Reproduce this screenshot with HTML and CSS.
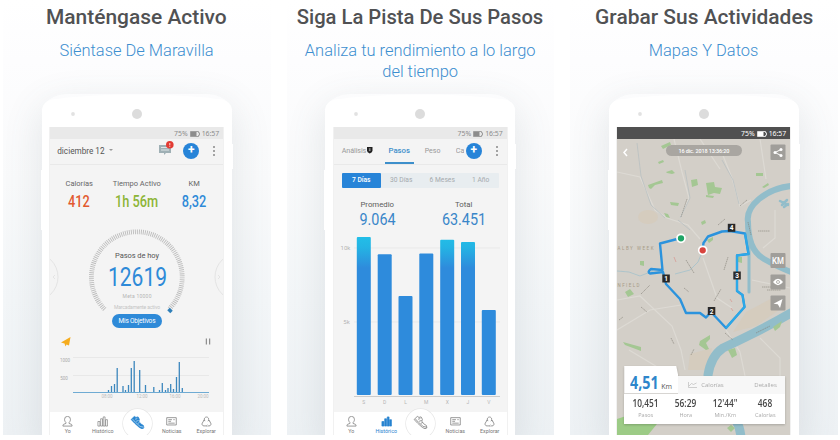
FILE: index.html
```html
<!DOCTYPE html>
<html lang="es">
<head>
<meta charset="utf-8">
<title>Podómetro</title>
<link rel="stylesheet" href="styles.css">
</head>
<body>
<svg class="defs" width="0" height="0" aria-hidden="true">
  <symbol id="cap" viewBox="0 0 190 33">
    <path d="M0 33V16Q0 8 10 5.500Q48 0.500 95 0.500T180 5.500Q190 8 190 16V33Z" fill="#fff"/>
    <circle cx="95" cy="20" r="5" fill="#dcdcdc"/><circle cx="31" cy="20" r="1.900" fill="#e2e2e2"/>
  </symbol>
  <symbol id="battery" viewBox="0 0 10 6">
    <path d="M.5 .5h8v1.300h1v2.400h-1v1.300h-8z" fill="none" stroke="currentColor" stroke-width=".8"/><path d="M1 1h5.500v4H1z" fill="currentColor"/>
  </symbol>
  <symbol id="user" viewBox="0 0 12 12">
    <path d="M4.300 7.200C3 6 2.800 4.500 2.800 3.600a3.200 3.200 0 0 1 6.400 0c0 .9-.2 2.400-1.500 3.600v.9l2.600 1q.7.400.7 1.900H1q0-1.500.7-1.900l2.600-1z" fill="none" stroke="currentColor" stroke-width=".8"/>
  </symbol>
  <symbol id="bars" viewBox="0 0 12 12">
    <path d="M1 6h2.200v5H1zM4 3h2v8H4zM6.800 1h2v10h-2zM9.400 4h2v7h-2z" fill="var(--fill, none)" stroke="currentColor" stroke-width=".7"/>
  </symbol>
  <symbol id="shoe" viewBox="0 0 16 16">
    <path d="M1.200 4.800 4.600 1.500 6.400 2.600 8.600 2 10 4.600 9.400 6.600 11.300 9.300 14.300 11.200 14.800 13.800 12.800 14.600 10 13.300 5 8.800z" fill="var(--fill, none)" stroke="currentColor" stroke-width=".8" stroke-linejoin="round"/>
    <path d="M2.600 4.200 5.800 7.700 10.800 12.200 14.500 13M5.400 4.500l2.400-.7M6.500 6.700l2.700-.9M8.300 8.900l2-.9" fill="none" stroke="var(--lace, currentColor)" stroke-width=".8"/>
  </symbol>
  <symbol id="news" viewBox="0 0 12 12">
    <path d="M.8 1.800h10.400v8H.8zM2.500 4h4M2.500 5.800h3M8 4h1.500M2.500 7.800h7" fill="none" stroke="currentColor" stroke-width=".8"/>
  </symbol>
  <symbol id="explore" viewBox="0 0 12 12">
    <path d="M3.700 4.200a2.400 2.400 0 1 1 4.600 0M8.700 4.700l1.900 3A2 2 0 0 1 8.800 10.800H7.300M3.300 4.700 1.400 7.700A2 2 0 0 0 3.200 10.800H5.500M2.500 4.900l1.200-.6.600 1.300M7 9.700 5.800 10.800 7 11.800M9.600 5.800 8.500 4.400 7.500 5.700" fill="none" stroke="currentColor" stroke-width=".8"/>
  </symbol>
</svg>

<main class="gallery">
  <section class="panel">
    <h2><span class="t1">Manténgase Activo</span></h2>
    <p class="sub"><span>Siéntase De Maravilla</span></p>
    <div class="phone">
      <svg class="cap"><use href="#cap"/></svg>
      <div class="screen">
        <div class="status">75% <svg class="battery"><use href="#battery"/></svg> 16:57</div>
        <header class="bar">
          <span class="date">diciembre 12</span><i class="caret"></i>
          <svg class="chat" viewBox="0 0 16 15"><path d="M1 4h12v8H8l-2 2v-2H1z" fill="#9fb0b5"/><path d="M3 6.500h7M3 9h8" stroke="#dfe6e8"/><circle cx="11.800" cy="3.800" r="3.800" fill="#e23b33"/><path d="M11.800 2v2.400M11.800 5v.8" stroke="#fff" stroke-width=".8"/></svg>
          <span class="add">+</span>
          <span class="dots"><i></i><i></i><i></i></span>
        </header>
        <div class="stats">
          <div><small>Calorías</small><b class="red">412</b></div>
          <div><small>Tiempo Activo</small><b class="green">1h 56m</b></div>
          <div><small>KM</small><b class="blue">8,32</b></div>
        </div>
        <svg class="dial" viewBox="50 213 173 117">
          <g fill="none" stroke="#e4e4e4"><circle cx="34" cy="277" r="24"/><circle cx="239" cy="277" r="24"/></g>
          <path d="M55 275l-2 2 2 2M218 275l2 2-2 2" fill="none" stroke="#ddd" stroke-width=".7"/>
          <path d="M104.700 309.300A45.400 45.400 0 1 1 168.900 309.300" fill="none" stroke="#bcbcbc" stroke-width="4.800" stroke-dasharray=".9 1.080"/>
          <path d="M168.500 309l3 3" stroke="#2f7fb8" stroke-width="3.500"/>
          <text x="137" y="258" font-size="7.500" fill="#555" textLength="44">Pasos de hoy</text>
          <text x="137.500" y="286" font-size="25" fill="#2e8ad8" textLength="59" lengthAdjust="spacingAndGlyphs">12619</text>
          <text x="137" y="297.500" font-size="5" fill="#b5b5b5" textLength="29">Meta 10000</text>
          <text x="137" y="308.500" font-size="5" fill="#c4c4c4" textLength="46">Marcadamente activo</text>
          <rect x="112" y="314" width="50" height="14" rx="7" fill="#2e8ad8"/>
          <text x="137" y="323.300" font-size="6.500" fill="#fff" textLength="37">Mis Objetivos</text>
        </svg>
        <svg class="chart" viewBox="50 330 173 82">
          <path d="M61 342.500 70.500 337 69 345.500 66.500 344.500 65.500 346.500 64.500 343.600z" fill="#f5ac1e"/>
          <path d="M206.300 338.500v6M209.700 338.500v6" stroke="#777"/>
          <path d="M73 357.500h136M73 375.500h136" stroke="#e8e8e8"/>
          <g fill="#aaa" font-size="4.500"><text x="65" y="362">1000</text><text x="64" y="379.500">500</text>
          <g fill="#bbb"><text x="107" y="398">08:00</text><text x="142" y="398">12:00</text><text x="175" y="398">16:00</text><text x="203" y="398">20:00</text></g></g>
          <path d="M108.500 392v-2M111.500 392v-6M114.500 392v-8M117.200 392v-24M123 392v-6M125.500 392v-2M128.500 392v-7M131.300 392v-24M134.200 392v-31M139.700 392v-22M145.500 392v-7M153.800 392v-5M159.500 392v-2M162.300 392v-9M165.500 392v-2M168 392v-4M170.700 392v-8M173.500 392v-3M176.500 392v-15M179.300 392v-30M182.300 392v-4" stroke="#3c87bd" stroke-width="1.300"/>
          <path d="M73 392.500h136" stroke="#6fabd3"/>
        </svg>
        <nav class="tabs">
          <span><svg><use href="#user"/></svg>Yo</span>
          <span><svg><use href="#bars"/></svg>Histórico</span>
          <span class="center on"><svg><use href="#shoe"/></svg></span>
          <span><svg><use href="#news"/></svg>Noticias</span>
          <span><svg><use href="#explore"/></svg>Explorar</span>
        </nav>
      </div>
    </div>
  </section>

  <section class="panel">
    <h2><span class="t2">Siga La Pista De Sus Pasos</span></h2>
    <p class="sub"><span>Analiza tu rendimiento a lo largo</span><br><span>del tiempo</span></p>
    <div class="phone">
      <svg class="cap"><use href="#cap"/></svg>
      <div class="screen">
        <div class="status">75% <svg class="battery"><use href="#battery"/></svg> 16:57</div>
        <header class="bar sections">
          <span class="analysis">Análisis<svg class="badge" viewBox="0 0 6 7"><path d="M0 0h6v4Q6 6 3 7 0 6 0 4z" fill="#222"/><path d="M2 2h2M2 3.500h2M3 1.500v3" stroke="#ddd" stroke-width=".5"/></svg></span>
          <span class="current">Pasos</span>
          <span class="weight">Peso</span>
          <span class="cut">Ca</span>
          <span class="add">+</span>
          <span class="dots"><i></i><i></i><i></i></span>
        </header>
        <div class="range"><span class="active">7 Días</span><span>30 Días</span><span>6 Meses</span><span>1 Año</span></div>
        <div class="totals">
          <div><small>Promedio</small><b>9.064</b></div>
          <div><small>Total</small><b>63.451</b></div>
        </div>
        <svg class="history" viewBox="333 230 173 182">
          <defs><linearGradient id="top" gradientUnits="userSpaceOnUse" x1="0" y1="236" x2="0" y2="268"><stop offset="0" stop-color="#22bfe8"/><stop offset=".35" stop-color="#24b4e4"/><stop offset="1" stop-color="#2e8bdc"/></linearGradient></defs>
          <path d="M353 248h146M353 322h146" stroke="#e9e9e9"/>
          <g fill="#b5b5b5" font-size="6"><text x="344.500" y="249.800">10k</text><text x="345.500" y="324">5k</text></g>
          <g fill="#2e8bdc">
            <rect x="355.800" y="237" width="14" height="158" rx="1" fill="url(#top)"/>
            <rect x="376.700" y="254.300" width="14" height="140.700" rx="1"/>
            <rect x="397.500" y="296" width="14" height="99" rx="1"/>
            <rect x="418.300" y="253.500" width="14" height="141.500" rx="1"/>
            <rect x="439.200" y="239.700" width="14" height="155.300" rx="1" fill="url(#top)"/>
            <rect x="460" y="242" width="14" height="153" rx="1" fill="url(#top)"/>
            <rect x="480.800" y="310" width="14" height="85" rx="1"/>
          </g>
          <path d="M353 396.500h146" stroke="#ccc"/>
          <g fill="#b5b5b5" font-size="5"><text x="362.800" y="404">S</text><text x="383.700" y="404">D</text><text x="404.500" y="404">L</text><text x="425.300" y="404">M</text><text x="446.200" y="404">X</text><text x="467" y="404">J</text><text x="487.800" y="404">V</text></g>
        </svg>
        <nav class="tabs">
          <span><svg><use href="#user"/></svg>Yo</span>
          <span class="on"><svg><use href="#bars"/></svg>Histórico</span>
          <span class="center"><svg><use href="#shoe"/></svg></span>
          <span><svg><use href="#news"/></svg>Noticias</span>
          <span><svg><use href="#explore"/></svg>Explorar</span>
        </nav>
      </div>
    </div>
  </section>

  <section class="panel">
    <h2><span class="t3">Grabar Sus Actividades</span></h2>
    <p class="sub"><span>Mapas Y Datos</span></p>
    <div class="phone">
      <svg class="cap"><use href="#cap"/></svg>
      <div class="screen">
        <div class="status dark">75% <svg class="battery"><use href="#battery"/></svg> 16:57</div>
        <div class="mapbox">
          <svg class="map" viewBox="617 139 173 296">
            <rect x="617" y="139" width="173" height="296" fill="#d3cfc8"/>
            <g fill="#d6cbb9" opacity=".7"><ellipse cx="648" cy="217" rx="10" ry="7"/><path d="M746 312 776 296 782 308 756 326 733 332zM690 354l22-6-4 22h-20z"/></g>
            <g fill="none" stroke="#dddad4" stroke-width="1.200">
              <path d="M617 172 640 177 655 210 667 218 688 225 700 239M674 139 682 172 689 198 680 218M720 148 732 178 740 206 751 200M617 300 640 296 672 326 681 350 685 370M617 330 650 310 681 305M726 330 740 352 745 376M760 139l6 40M700 139l20 30M775 210v28l-12 10M752 280l38 8M703 258l14 40 15 10M629 350l40 24M760 338l20 20v20"/>
            </g>
            <g fill="none" stroke="#b9c0c1" stroke-width=".8">
              <path d="M637 143 641 176 651 205 665 218M685 170 690 198 680 218M678 220 690 230M722 160 733 180 739 204"/>
              <path d="M617 271 629 272 640 276 653 271M675 274 690 270 698 262 703 250" stroke="#a3c2cc"/>
            </g>
            <g fill="none" stroke="#92bdca" stroke-linecap="round">
              <path d="M791 186Q772 188 759 199T748 222Q748 250 764 259T791 272" stroke-width="6"/>
              <path d="M749 231v61" stroke-width="3"/>
              <path d="M791 313Q772 324 754 333T723 348Q711 356 708 375Q708 395 724 407T741 438" stroke-width="9"/>
              <path d="M782 205l5-5M780 201l8 4M784 207l4-3" stroke-width="2.500"/>
            </g>
            <path d="M617 419 632 414H665L648 435H617z" fill="#9ccb86"/>
            <g fill="#a4c793">
              <path d="M661 146l9-4 1 3-8 4zM658 162l5-2 1 2-5 2zM666 172l6-2 3 3-3 1-5-1zM648 185l14-5 1 3-8 2-4 4-2-1zM691 180l6-1 1 6-6 2zM706 183l8-1 1 5 7 1-2 6-6-1-6 2zM706 195l8 1-1 2-7-1zM756 173h7v3h-7zM762 187l6-4 1 2-5 3zM670 202l9 1-1 3-7-1zM664 213l4 1 2 4-4-1zM701 222l4-2 1 3-4 2zM707 240l6-3v3l-4 3zM738 257h4v6l-4-1zM640 261h4v5l-4-1zM625 292l5-3 4 5-6 3zM623 342l18 5v4l-16-6zM700 341l10-6v4l-4 4 3 6-3 1-7-5zM773 327l9-6-2 6-5 4zM728 350l7-2 2 7-5 3zM727 428l4-3 4 3-4 4z"/>
            </g>
            <g stroke="#858178" stroke-width=".9" opacity=".65">
              <path d="M681 217l6-18M718 225l7-6M740 206l7-6M686 260l8 13M641 294l9-9M724 270l4-13M714 301l7-12M684 288l5 4M641 307l6 5M671 338l3 6M691 355l3-6M725 333l8 7M756 333l14-7M758 231h12M762 287h18M767 290h14M619 320l4-3M748 222l3 13" stroke-dasharray="1.500 .5"/>
              <path d="M674 257l2 5M730 299l2 3M731 308l2 3" stroke="#d98b84"/>
            </g>
            <g class="place"><text x="617.500" y="249.500" textLength="36">ALBY WEEK</text><text x="617.500" y="287" textLength="22">NFIELD</text></g>
            <path d="M681 238 660 243.500 662.500 270 651 269Q647 272 650 273.500L663 272 666 284 680 299 686 313H700L706 317.500 711 312 726 328 744.500 307 742.500 295 737 291V255.500L748.500 254 745 233.500 730 231 722 231.500 708 236.500 703.500 243 702.500 250" fill="none" stroke="#2b93dd" stroke-width="2.400" stroke-linejoin="round"/>
            <path d="M726 328 744.500 307 742.500 295 737 291V255.500L748.500 254 745 233.500" fill="none" stroke="#2ca9e8" stroke-width="2"/>
            <g stroke="#fff" stroke-width="1.700"><circle cx="681" cy="238.300" r="4" fill="#20a566"/><circle cx="702.700" cy="250.300" r="4" fill="#d8443e"/></g>
            <g fill="#292929"><rect x="662.300" y="274.500" width="7.500" height="8"/><rect x="707.800" y="307" width="7.500" height="8"/><rect x="733.300" y="271.500" width="7.500" height="8"/><rect x="727.800" y="223.800" width="7.500" height="8"/></g>
            <g class="marker"><text x="666" y="281">1</text><text x="711.500" y="313.500">2</text><text x="737" y="278">3</text><text x="731.500" y="230.300">4</text></g>
            <path d="M627 149l-3 3.500 3 3.500" fill="none" stroke="#fff" stroke-width="1.500"/>
            <rect x="666" y="145" width="76" height="11" rx="5.500" fill="#a9a6a1"/>
            <text x="704" y="152.500" font-size="5.500" font-weight="500" fill="#fff" textLength="51">16 dic. 2018 13:36:20</text>
            <g fill="#a09e9a"><rect x="770.500" y="144.500" width="15" height="15.500" rx="1"/><rect x="770.500" y="253" width="15" height="15" rx="1"/><rect x="770.500" y="274.500" width="15" height="15" rx="1"/><rect x="770.500" y="295.500" width="15" height="15" rx="1"/></g>
            <path d="M781 149.500 775 152.500 781 155.500" fill="none" stroke="#fff"/>
            <g fill="#fff"><circle cx="781" cy="149.500" r="1.500"/><circle cx="775" cy="152.500" r="1.500"/><circle cx="781" cy="155.500" r="1.500"/></g>
            <text x="778" y="263.700" font-size="8.500" font-weight="500" fill="#fff" textLength="12" lengthAdjust="spacingAndGlyphs">KM</text>
            <path d="M773 282q5-6.500 10 0-5 6.500-10 0" fill="#fff"/><circle cx="778" cy="282" r="1.500" fill="none" stroke="#a09e9a" stroke-width=".8"/>
            <path d="M782.500 299 780 308 777.800 304.300 773.500 303.700z" fill="#fff"/>
          </svg>
          <div class="card">
            <div class="distance"><b>4,51</b><small>Km</small></div>
            <div class="links"><svg viewBox="0 0 9 6"><path d="M.5 0v5.500H9M1 4l2.500-2.500 2 1L8.500 1" fill="none" stroke="#bbb" stroke-width=".7"/></svg><span>Calorías</span><span class="more">Detalles</span></div>
            <div class="figures">
              <div><b>10,451</b><small>Pasos</small></div>
              <div><b>56:29</b><small>Hora</small></div>
              <div><b>12'44"</b><small>Min./Km</small></div>
              <div><b>468</b><small>Calorías</small></div>
            </div>
          </div>
        </div>
      </div>
    </div>
  </section>
</main>
</body>
</html>
```
FILE: styles.css
```css
* { box-sizing: border-box; }
body { margin: 0; height: 440px; overflow: hidden; background: #fff; font-family: Roboto, "Liberation Sans", sans-serif; }
svg { display: block; }
svg text { text-anchor: middle; font-family: Roboto, sans-serif; }
.defs { position: absolute; }
.gallery { display: flex; gap: 16px; padding-left: 3px; height: 434.5px; overflow: hidden; }
.panel {
  width: 267.5px; flex: none; overflow: hidden; display: flex; flex-direction: column; align-items: center;
  background: linear-gradient(#fff 0, #fdfdfe 60px, #f9fafb 180px, #f3f6f8 300px, #edf1f4 435px);
}
h2 { margin: 0; height: 36px; padding-top: 5px; line-height: 24px; font-size: 20px; font-weight: 500; color: #505153; white-space: nowrap; }
.sub { margin: 0; height: 58px; padding-top: 4px; font-size: 17px; line-height: 21.500px; font-weight: 300; color: #3d8fd0; text-align: center; white-space: nowrap; }
h2 span, .sub span { display: inline-block; }
.t1, .t3 { transform: scaleX(1.047); }
.t2 { transform: scaleX(1.01); }
.sub span { transform: scaleX(.968); }

.phone { position: relative; width: 190px; height: 341px; flex: none; padding: 0 8.500px; border-radius: 26px 26px 0 0 / 18px 18px 0 0; background: linear-gradient(transparent 30px, #fff 30px); box-shadow: 0 12px 36px 4px rgba(80, 95, 105, .12); }
.phone::before, .phone::after { content: ""; position: absolute; width: 1px; background: #fff; }
.phone::before { left: -1px; top: 76px; height: 60px; }
.phone::after { right: -1px; top: 50px; height: 25px; }
.cap { width: 190px; height: 33px; margin-left: -8.500px; }
.screen { width: 173px; height: 308px; background: #f4f4f4; display: flex; flex-direction: column; box-shadow: 0 0 0 .5px #e3e3e3; overflow: hidden; }
.status { height: 12px; flex: none; display: flex; align-items: center; justify-content: flex-end; gap: 2px; padding: 2px 4px 0 0; background: #e9e9e9; color: #8c8c8c; font: 6.900px/10px "Noto Sans", sans-serif; }
.battery { width: 10px; height: 6px; }
.status.dark { background: #505050; color: #fff; }

.bar { height: 26px; flex: none; display: flex; align-items: center; border-bottom: 1px solid #e9e9e9; font-size: 8.200px; color: #555; padding: 0 8px 1px 7px; }
.date { width: 47px; white-space: nowrap; }
.caret { margin: 0 0 1px 4.500px; border: 2.500px solid transparent; border-top-color: #999; border-bottom: 0; }
.chat { width: 16px; height: 15px; margin: -5px 11px 0 auto; }
.add { width: 16px; height: 16px; border-radius: 50%; background: #2784d8; color: #fff; font-size: 12px; font-weight: 700; line-height: 15.500px; text-align: center; }
.chat + .add { margin-right: -1.500px; position: relative; left: -1.500px; }
.dots { display: flex; flex-direction: column; gap: 2px; margin-left: 14px; }
.dots i { width: 2px; height: 2px; border-radius: 50%; background: #888; }

.stats { height: 48px; flex: none; display: grid; grid-template-columns: 58px 57px 58px; text-align: center; padding-top: 13px; white-space: nowrap; }
.stats small { display: block; font-size: 7.500px; line-height: 12px; color: #666; }
.stats b { display: block; font-size: 16.800px; line-height: 22px; font-weight: 500; transform: scaleX(.76); }
.red { color: #e2592f; } .green { color: #8db537; } .blue { color: #2e8ad8; }
.dial { width: 173px; height: 117px; flex: none; }
.chart { width: 173px; height: 82px; flex: none; }

.tabs { height: 23px; flex: none; display: grid; grid-template-columns: 35px 35px 34px 35px 34px; background: #fff; color: #777; font-size: 5.300px; line-height: 6px; text-align: center; }
.tabs span { display: flex; flex-direction: column; align-items: center; padding-top: 4px; }
.tabs svg { width: 11px; height: 11px; margin-bottom: 1.500px; }
.tabs .on { color: #2784d0; --fill: #2784d0; --lace: #bcdcf2; }
.tabs .center { width: 29px; height: 29px; margin: -3px 0 0 2.500px; padding-top: 6px; border-radius: 50%; background: #fff; box-shadow: 0 0 0 .7px #e6e6e6; }
.tabs .center svg { width: 15px; height: 15px; }

.sections { padding-left: 8px; font-size: 7.200px; color: #999; }
.analysis { display: flex; align-items: center; width: 43px; letter-spacing: -.1px; }
.badge { width: 5.500px; height: 6.500px; margin-left: 1px; }
.current { width: 29px; height: 26px; padding-top: 1px; line-height: 24px; text-align: center; font-size: 7.800px; font-weight: 500; color: #3d8fcb; border-bottom: 2px solid #3d8fcb; }
.weight { width: 31px; margin-left: 11px; font-size: 7px; }
.cut { width: 8px; overflow: hidden; margin-right: 2px; }
.sections .add { flex: none; margin-left: 0; }
.range { height: 15px; flex: none; margin: 8px 8px 0; display: grid; grid-template-columns: 39px 41px 41px 36px; background: #e8edf0; color: #a5aaae; font-size: 6.700px; line-height: 15px; text-align: center; border-radius: 1px; }
.range .active { background: #2784d8; color: #fff; font-weight: 500; border-radius: 1px; }
.totals { height: 42px; flex: none; display: grid; grid-template-columns: 87px 86px; text-align: center; padding-top: 11px; }
.totals small { display: block; font-size: 7.800px; line-height: 11px; color: #5c5c5c; }
.totals b { display: block; font-size: 15.800px; line-height: 19px; font-weight: 400; color: #3986c9; transform: scaleX(.91); }
.history { width: 173px; height: 182px; flex: none; }

.mapbox { position: relative; height: 296px; }
.map { width: 173px; height: 296px; }
.map .place { font-size: 4.500px; fill: #a79b87; }
.map .place text { text-anchor: start; }
.map .marker { font-size: 6.500px; font-weight: 700; fill: #fff; }
.card { position: absolute; left: 7px; top: 227px; width: 160.500px; height: 58.500px; display: grid; grid-template: 10px 18px 30.500px / 54px 1fr; filter: drop-shadow(0 1px 1px rgba(0, 0, 0, .2)); font-family: "Open Sans", sans-serif; }
.distance { grid-row: 1 / 3; background: #fff; clip-path: polygon(0 0, 96% 0, 100% 36%, 100% 100%, 0 100%); display: flex; align-items: baseline; padding-left: 6px; color: #555; }
.distance b { width: 31px; font-size: 17px; line-height: 33px; font-weight: 700; color: #2e86cb; transform: scaleX(.84); transform-origin: left; }
.distance small { font-size: 7px; }
.links { grid-row: 2; grid-column: 2; background: #f7f7f7; display: flex; align-items: center; padding: 0 8px 0 10px; font-size: 6px; color: #aaa; }
.links svg { width: 9px; height: 6px; margin-right: 4px; }
.links .more { margin-left: auto; }
.figures { grid-row: 3; grid-column: 1 / 3; background: #fff; display: grid; grid-template-columns: 43px 37px 42px 38px; text-align: center; padding-top: 4px; }
.figures b { display: block; font-size: 9.800px; line-height: 12px; font-weight: 600; color: #454545; transform: scaleX(.85); }
.figures small { display: block; font-size: 5.500px; line-height: 10px; color: #aaa; }
```
